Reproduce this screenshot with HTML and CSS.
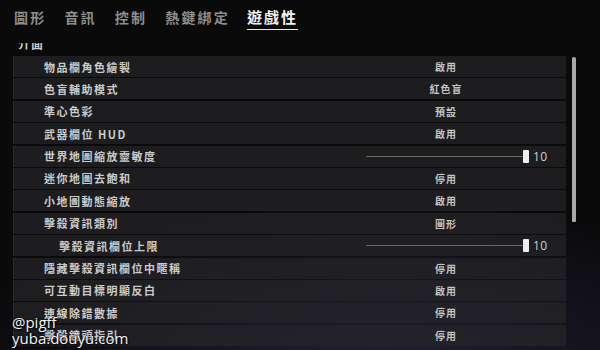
FILE: index.html
```html
<!DOCTYPE html>
<html lang="zh-Hant">
<head>
<meta charset="utf-8">
<link rel="stylesheet" href="styles.css">
</head>
<body>
<div class="screen">
  <nav class="tabs">
    <span class="tab">圖形</span>
    <span class="tab">音訊</span>
    <span class="tab">控制</span>
    <span class="tab">熱鍵綁定</span>
    <span class="tab active">遊戲性</span>
  </nav>
  <div class="panel">
    <div class="scroll">
      <div class="heading">介面</div>
      <div class="list">
        <div class="row"><span class="label">物品欄角色繪製</span><span class="value">啟用</span></div>
        <div class="row"><span class="label">色盲輔助模式</span><span class="value">紅色盲</span></div>
        <div class="row"><span class="label">準心色彩</span><span class="value">預設</span></div>
        <div class="row"><span class="label">武器欄位 HUD</span><span class="value">啟用</span></div>
        <div class="row"><span class="label">世界地圖縮放靈敏度</span><span class="slider"><span class="track"></span><span class="thumb"></span></span><span class="num">10</span></div>
        <div class="row"><span class="label">迷你地圖去飽和</span><span class="value">停用</span></div>
        <div class="row"><span class="label">小地圖動態縮放</span><span class="value">啟用</span></div>
        <div class="row"><span class="label">擊殺資訊類別</span><span class="value">圖形</span></div>
        <div class="row"><span class="label sub">擊殺資訊欄位上限</span><span class="slider"><span class="track"></span><span class="thumb"></span></span><span class="num">10</span></div>
        <div class="row"><span class="label">隱藏擊殺資訊欄位中暱稱</span><span class="value">停用</span></div>
        <div class="row"><span class="label">可互動目標明顯反白</span><span class="value">啟用</span></div>
        <div class="row"><span class="label">連線除錯數據</span><span class="value">停用</span></div>
        <div class="row"><span class="label">擊殺鏡頭指引</span><span class="value">停用</span></div>
      </div>
    </div>
    <div class="scrollbar"><div class="thumbbar"></div></div>
  </div>
  <div class="watermark">
    <div>@pigff</div>
    <div>yuba.douyu.com</div>
  </div>
</div>
</body>
</html>
```

FILE: styles.css
```css
* { box-sizing: border-box; }
html, body {
  margin: 0;
  padding: 0;
  width: 600px;
  height: 350px;
  overflow: hidden;
  background: #0a0a0b;
}
.screen {
  position: relative;
  width: 600px;
  height: 350px;
  background: radial-gradient(ellipse 420px 160px at 380px 360px, #221f33 0%, rgba(30,27,45,0.6) 45%, rgba(10,10,11,0) 100%), #0a0a0b;
  font-family: "Noto Sans CJK TC", "Noto Sans", sans-serif;
  overflow: hidden;
}
.tabs {
  display: flex;
  gap: 18px;
  height: 43px;
  padding: 7px 0 0 14px;
  align-items: flex-start;
}
.tab {
  font-size: 14px;
  line-height: 20px;
  font-weight: 700;
  letter-spacing: 2.2px;
  color: #8e8e8e;
  padding-bottom: 2px;
}
.tab.active {
  color: #f2f2f2;
  font-size: 15px;
  letter-spacing: 2px;
  border-bottom: 1.5px solid #e8e8e8;
  margin-left: -1px;
}
.panel {
  display: flex;
  height: 307px;
}
.scroll {
  width: 566px;
  padding-left: 13px;
  overflow: hidden;
}
.heading {
  margin-top: -6px;
  margin-bottom: 6px;
  padding-left: 5px;
  font-size: 12px;
  line-height: 13px;
  font-weight: 700;
  color: #cfcfcf;
  letter-spacing: 1px;
}
.list {
  display: flex;
  flex-direction: column;
  gap: 1.4px;
}
.row {
  display: grid;
  grid-template-columns: 352px 160px 41px;
  align-items: center;
  height: 21px;
  background: rgba(38, 38, 40, 0.72);
  border-left: 1px solid #2c2c2e;
}
.label {
  padding-left: 30px;
  font-size: 11px;
  font-weight: 700;
  letter-spacing: 1.5px;
  color: #cbcbcb;
  white-space: nowrap;
}
.label.sub { padding-left: 45px; }
.value {
  text-align: center;
  font-size: 10px;
  font-weight: 700;
  letter-spacing: 1px;
  color: #c4c4c4;
}
.slider {
  position: relative;
  display: flex;
  align-items: center;
  height: 21px;
}
.track {
  display: block;
  width: 100%;
  height: 1px;
  background: #6a6a6a;
}
.thumb {
  position: absolute;
  right: -3px;
  top: 4px;
  width: 6px;
  height: 13px;
  background: #eeeeee;
  border-radius: 1px;
}
.num {
  padding-left: 7px;
  font-family: "Open Sans", "Liberation Sans", sans-serif;
  font-size: 12px;
  color: #cfcfcf;
  letter-spacing: 0.5px;
}
.scrollbar {
  margin-left: 6px;
  width: 4px;
  padding-top: 14px;
}
.thumbbar {
  width: 4px;
  height: 165px;
  background: #a9a9a9;
  border-radius: 2px 2px 1px 1px;
}
.watermark {
  position: absolute;
  left: 12px;
  bottom: 4px;
  font-family: "Open Sans", "DejaVu Sans", sans-serif;
  font-size: 15px;
  line-height: 16px;
  color: #f4f4f4;
  text-shadow: 0 0 2px #000, 1px 1px 2px #000;
}
```
